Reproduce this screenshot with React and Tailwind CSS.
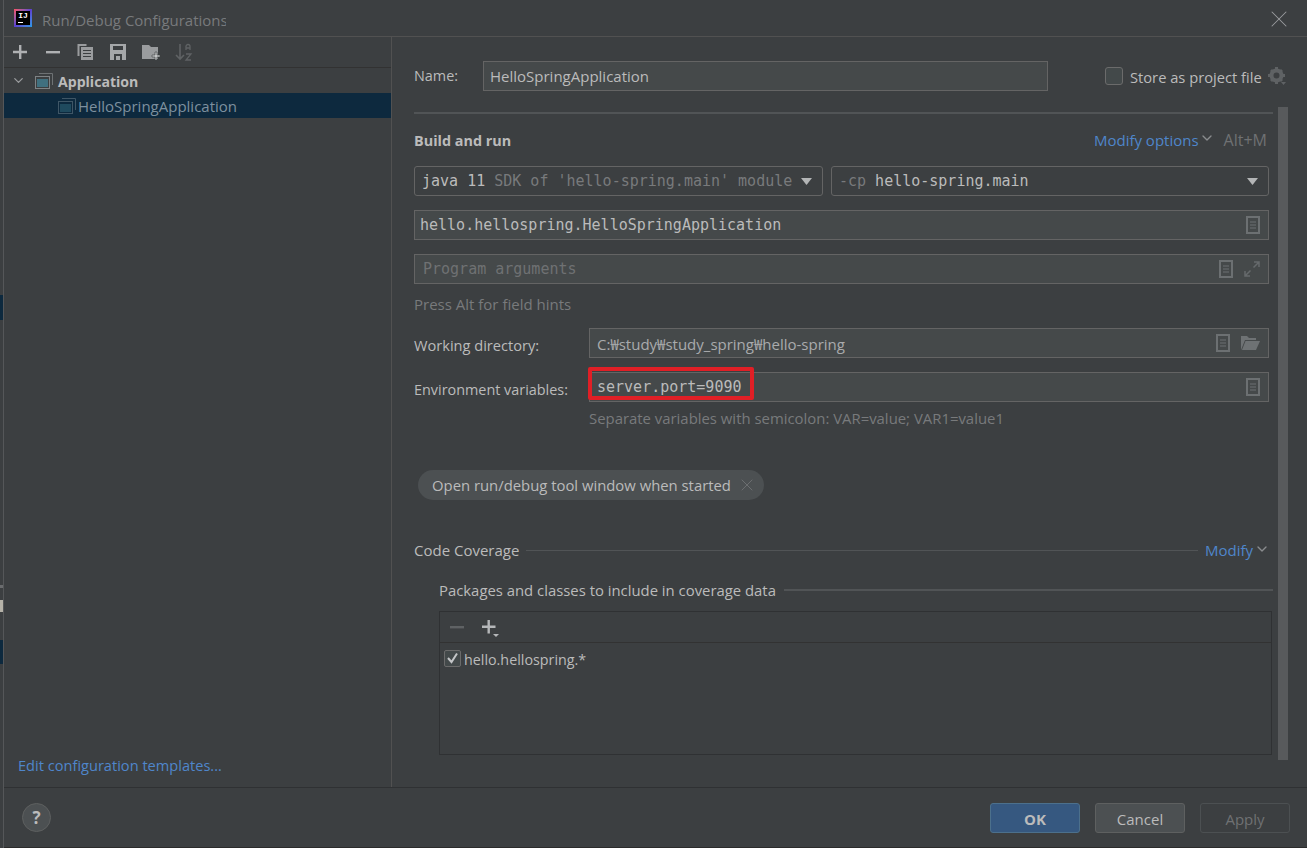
import React from 'react';
import { ChevronDown, X } from 'lucide-react';

const uiFont = { fontFamily: '"Open Sans", "Noto Sans CJK KR", sans-serif' };
const fieldClass = 'h-[30px] bg-[#45494a] border border-[#646464] flex items-center';
const monoClass = "font-['DejaVu_Sans_Mono',monospace] text-[15px] tracking-[0px]";

const DocIcon = () => (
    <svg width="14" height="18" viewBox="0 0 14 18" fill="none" stroke="#6c7072">
        <rect x="1" y="1" width="12" height="16" strokeWidth="2" />
        <path d="M4 6h6M4 9h6M4 12h6" strokeWidth="1" />
    </svg>
);

const WindowIcon = ({ dim }) => (
    <svg width="18" height="16" viewBox="0 0 18 16" fill="none">
        <path d="M4 .5h13.5V12" stroke={dim ? '#3f5666' : '#6e7274'} />
        <rect x=".5" y="3.5" width="14" height="12" stroke={dim ? '#3f5666' : '#7f8385'} />
        <rect x="2" y="6" width="11" height="8" fill={dim ? '#1f4a5e' : '#40707f'} />
    </svg>
);

const Dropdown = () => (
    <svg width="12" height="7" viewBox="0 0 12 7"><path d="M0 0h11L5.5 7z" fill="#b3b5b6" /></svg>
);

const Toolbar = () => (
    <div className="h-[31px] border-b border-[#323232] flex items-center">
        <svg className="ml-[9px]" width="14" height="14" viewBox="0 0 14 14"><path d="M6 0h2.400v5.800H14v2.400H8.400V14H6V8.200H0V5.800h6z" fill="#afb1b3" /></svg>
        <svg className="ml-[19px]" width="14" height="14" viewBox="0 0 14 14"><path d="M0 6h14v2.400H0z" fill="#afb1b3" /></svg>
        <svg className="ml-[17px]" width="16" height="16" viewBox="0 0 16 16">
            <path d="M.5 0h9v2H2.500v10h-2z" fill="#9a9c9e" />
            <path d="M4 3h12v13H4z" fill="#9a9c9e" />
            <path d="M6 6h8v1H6zM6 9h8v1H6zM6 12h8v1H6z" fill="#3c3f41" />
        </svg>
        <svg className="ml-[17px]" width="16" height="16" viewBox="0 0 16 16">
            <path d="M0 0h16v16H0z" fill="#a5a7a9" />
            <path d="M3 2h10v4H3zM4 10h8v6H4z" fill="#3c3f41" />
            <path d="M6 12h4v4H6z" fill="#a5a7a9" />
        </svg>
        <svg className="ml-[16px]" width="19" height="16" viewBox="0 0 19 16">
            <path d="M0 1h7l2 2h7v12H0z" fill="#9a9c9e" />
            <path d="M13 8h2v3h3v2h-3v3h-2v-3h-3v-2h3z" fill="#c3c5c6" stroke="#3c3f41" strokeWidth=".6" />
        </svg>
        <svg className="ml-[14px]" width="18" height="18" viewBox="0 0 18 18" fill="none" stroke="#5f6264" strokeWidth="1.600">
            <path d="M5 1v15M1 12l4 4 4-4" />
            <path d="M11 7V3.500a2 2 0 0 1 4 0V7M11 5h4M11 11h5l-5 6h5" strokeWidth="1.300" />
        </svg>
    </div>
);

const Sidebar = () => (
    <div className="w-[388px] border-r border-[#515151] flex flex-col shrink-0">
        <Toolbar />
        <div className="h-[25px] flex items-center">
            <ChevronDown className="ml-[7px] text-[#9a9c9e]" size={15} strokeWidth={2} />
            <div className="ml-[9px]"><WindowIcon /></div>
            <span className="ml-[5px] mt-[2px] text-[14.100px] font-bold text-[#bbbbbb]">Application</span>
        </div>
        <div className="h-[25px] bg-[#0d293e] flex items-center pl-[54px]">
            <WindowIcon dim />
            <span className="ml-[2px] mt-[2px] text-[15px] text-[#7d909e]">HelloSpringApplication</span>
        </div>
        <div className="mt-auto mb-[10px] ml-[14px] text-[14.600px] text-[#4f86cb]">Edit configuration templates...</div>
    </div>
);

const Label = ({ children, className }) => (
    <span className={`text-[15px] text-[#bbbbbb] whitespace-nowrap shrink-0 ${className || ''}`}>{children}</span>
);

const Form = () => (
    <div className="relative flex-1 min-w-0 pl-[22px] pr-[38px] pt-[24px]">
        {/* overlay scrollbar */}
        <div className="absolute left-[886px] top-[70px] w-[10px] h-[653px] bg-[#585a5c]" />

        <div className="flex items-center">
            <Label className="w-[69px] !text-[14.400px]">Name:</Label>
            <div className={`${fieldClass} w-[565px] shrink-0 pl-[6px]`}>
                <Label>HelloSpringApplication</Label>
            </div>
            <div className="ml-[57px] w-[18px] h-[18px] shrink-0 rounded-[3px] bg-[#43494a] border border-[#6b6b6b] -mt-[1px]" />
            <Label className="ml-[7px] mt-[3px] !text-[14.700px]">Store as project file</Label>
            <svg className="ml-[6px] -mt-[1px] shrink-0" width="18" height="18" viewBox="0 0 18 18">
                <circle cx="8.500" cy="8.500" r="5" fill="none" stroke="#5f6264" strokeWidth="4" />
                <path d="M7 0h3v3H7zM7 14h3v3H7zM0 7h3v3H0zM14 7h3v3h-3zM2 4l2-2 2 2-2 2zM11 4l2-2 2 2-2 2zM2 13l2-2 2 2-2 2zM11 13l2-2 2 2-2 2z" fill="#5f6264" />
                <path d="M13 15h5l-2.500 3z" fill="#5f6264" />
            </svg>
        </div>

        <div className="h-[2px] bg-[#515456] mt-[21px] -mr-[4px]" />

        <div className="flex items-center justify-between mt-[15px] h-[22px]">
            <span className="mt-[2px] text-[14.400px] font-bold text-[#bbbbbb]">Build and run</span>
            <div className="flex items-center">
                <span className="text-[15px] text-[#4f86cb]">Modify options</span>
                <ChevronDown className="-mt-[4px] text-[#8a8c8e]" size={16} strokeWidth={2} />
                <span className="ml-[9px] mr-[2px] text-[16px] text-[#6f7173]">Alt+M</span>
            </div>
        </div>

        <div className="flex gap-[8px] mt-[15px]">
            <div className={`${fieldClass} !bg-[#3c3f41] w-[409px] rounded-[3px] pl-[7px] pr-[9px] justify-between`}>
                <span className={`${monoClass} text-[#bbbbbb] whitespace-nowrap`}>java 11 <span className="text-[#787a7c]">SDK of 'hello-spring.main' module</span></span>
                <Dropdown />
            </div>
            <div className={`${fieldClass} !bg-[#3c3f41] flex-1 rounded-[3px] pl-[7px] pr-[9px] justify-between`}>
                <span className={`${monoClass} text-[#bbbbbb] whitespace-nowrap`}><span className="text-[#787a7c]">-cp</span> hello-spring.main</span>
                <Dropdown />
            </div>
        </div>

        <div className={`${fieldClass} mt-[14px] pl-[5px] pr-[8px] justify-between`}>
            <span className={`${monoClass} text-[#bbbbbb]`}>hello.hellospring.HelloSpringApplication</span>
            <DocIcon />
        </div>

        <div className={`${fieldClass} mt-[14px] pl-[8px] pr-[8px]`}>
            <span className={`${monoClass} text-[#6f7173] flex-1`}>Program arguments</span>
            <DocIcon />
            <svg className="ml-[11px]" width="16" height="16" viewBox="0 0 16 16" fill="none" stroke="#666a6c" strokeWidth="1.500">
                <path d="M10 1h5v5M15 1L9.500 6.500M6 15H1v-5M1 15l5.500-5.500" />
            </svg>
        </div>

        <div className="mt-[10px] text-[15px] leading-[20px] text-[#787a7c]">Press Alt for field hints</div>

        <div className="flex items-center mt-[14px]">
            <Label className="w-[175px] mt-[6px] !text-[14.600px]">Working directory:</Label>
            <div className={`${fieldClass} flex-1 pl-[7px] pr-[8px]`}>
                <span className="flex-1 mt-[2px] text-[15px] text-[#a9abad]">C:₩study₩study_spring₩hello-spring</span>
                <DocIcon />
                <svg className="ml-[11px]" width="19" height="14" viewBox="0 0 19 14">
                    <path d="M0 14V0h6l2 2h7v2H4L0 14z" fill="#6e7274" />
                    <path d="M4.500 5H19l-4 9H1z" fill="#6e7274" />
                </svg>
            </div>
        </div>

        <div className="flex items-center mt-[14px]">
            <Label className="w-[175px] mt-[6px] !text-[14.400px]">Environment variables:</Label>
            <div className={`${fieldClass} relative flex-1 pl-[7px] pr-[8px] justify-between`}>
                <span className={`${monoClass} text-[#bbbbbb]`}>server.port=9090</span>
                <DocIcon />
                <div className="absolute -left-[2px] -top-[6px] w-[166px] h-[33px] border-[4px] border-[#e01f26] rounded-[2px]" />
            </div>
        </div>

        <div className="ml-[175px] mt-[6px] text-[14.900px] leading-[20px] text-[#787a7c]">Separate variables with semicolon: VAR=value; VAR1=value1</div>

        <div className="mt-[42px] ml-[4px] w-[346px] h-[30px] rounded-full bg-[#4c5052] flex items-center pl-[14px]">
            <Label className="!text-[14.850px]">Open run/debug tool window when started</Label>
            <X className="ml-[6px] text-[#6f7173]" size={20} strokeWidth={1.100} />
        </div>

        <div className="flex items-center mt-[39px] h-[22px]">
            <Label>Code Coverage</Label>
            <div className="flex-1 h-px bg-[#515456] ml-[7px] mr-[7px]" />
            <span className="text-[15px] text-[#4f86cb]">Modify</span>
            <ChevronDown className="ml-[1px] -mr-[1px] -mt-[3px] text-[#8a8c8e]" size={16} strokeWidth={2} />
        </div>

        <div className="ml-[25px] -mr-[4px]">
            <div className="flex items-center mt-[18px] h-[22px]">
                <Label className="!text-[14.870px]">Packages and classes to include in coverage data</Label>
                <div className="flex-1 h-[2px] bg-[#515456] ml-[8px]" />
            </div>
            <div className="mt-[10px] h-[144px] border border-[#2f3133] mr-[1px]">
                <div className="h-[31px] border-b border-[#323232] flex items-center">
                    <svg className="ml-[10px]" width="14" height="3" viewBox="0 0 14 3"><path d="M0 0h14v2.400H0z" fill="#5f6264" /></svg>
                    <svg className="ml-[18px] mt-[4px]" width="18" height="19" viewBox="0 0 18 19">
                        <path d="M5.500 0h2.400v5.500H13.500v2.400H7.900v5.600H5.500V7.900H0V5.500h5.500z" fill="#b5b7b9" />
                        <path d="M11 14h6l-3 3z" fill="#b5b7b9" />
                    </svg>
                </div>
                <div className="flex items-center h-[33px] pl-[4px]">
                    <div className="w-[17px] h-[17px] rounded-[2px] border border-[#6b6b6b] bg-[#43494a] flex items-center justify-center -mt-[3px]">
                        <svg width="13" height="12" viewBox="0 0 13 12" fill="none"><path d="M2 6l3.500 4L11 1.500" stroke="#c4c6c8" strokeWidth="2" /></svg>
                    </div>
                    <Label className="ml-[3px] !text-[14.300px]">hello.hellospring.*</Label>
                </div>
            </div>
        </div>
    </div>
);

const Footer = () => (
    <div className="h-[61px] border-t border-[#2f3133] border-b-[#2b2b2b] border-b flex items-center">
        <div className="ml-[18px] w-[29px] h-[29px] rounded-full bg-[#4c5052] border border-[#5e6060] flex items-center justify-center text-[17px] font-bold text-[#bbbbbb]">?</div>
        <div className="ml-auto mr-[17px] flex gap-[15px]">
            <div className="w-[90px] h-[30px] pt-[4px] rounded-[3px] bg-[#365880] border border-[#4c708c] flex items-center justify-center text-[15px] font-bold text-[#bbbbbb]">OK</div>
            <div className="w-[90px] h-[30px] pt-[4px] rounded-[3px] bg-[#4c5052] border border-[#5e6060] flex items-center justify-center text-[15px] text-[#bbbbbb]">Cancel</div>
            <div className="w-[90px] h-[30px] pt-[4px] rounded-[3px] border border-[#4c5052] flex items-center justify-center text-[15px] text-[#6f7173]">Apply</div>
        </div>
    </div>
);

// sliver of the IDE window that shows behind the dialog
const BehindStrip = () => (
    <div className="w-[4px] shrink-0 bg-[#3c3f41] border-r border-[#555759] flex flex-col">
        <div className="mt-[295px] h-[25px] bg-[#0d293e]" />
        <div className="mt-[265px] h-[3px] bg-[#6a6c6e]" />
        <div className="mt-[12px] h-[12px] bg-[#b5b2a8]" />
        <div className="mt-[28px] h-[24px] bg-[#0d293e]" />
    </div>
);

const App = () => {
    return (
        <div className="w-[1307px] h-[848px] bg-[#3c3f41] flex overflow-hidden" style={uiFont}>
            <BehindStrip />
            <div className="flex-1 min-w-0 flex flex-col">
                <div className="h-[37px] shrink-0 border-b border-[#515151] flex items-center">
                    <div className="ml-[10px] w-[18px] h-[18px] bg-gradient-to-br from-[#fc4f5f] via-[#5a3fd0] to-[#1f9be8] p-[2px]">
                        <div className="relative w-full h-full bg-black text-white text-[8px] font-bold leading-[9px] text-center overflow-hidden font-['Liberation_Mono',monospace]">
                            IJ
                            <div className="absolute left-[2px] bottom-[2px] w-[5px] h-px bg-white" />
                        </div>
                    </div>
                    <div className="ml-[10px] pt-[4px] w-[184px] overflow-hidden whitespace-nowrap text-[15px] text-[#787a7c]">Run/Debug Configurations</div>
                    <X className="ml-auto mr-[14px] mt-[2px] text-[#9a9c9e]" size={28} strokeWidth={.9} />
                </div>
                <div className="flex-1 min-h-0 flex">
                    <Sidebar />
                    <Form />
                </div>
                <Footer />
            </div>
        </div>
    );
};

export default App;
